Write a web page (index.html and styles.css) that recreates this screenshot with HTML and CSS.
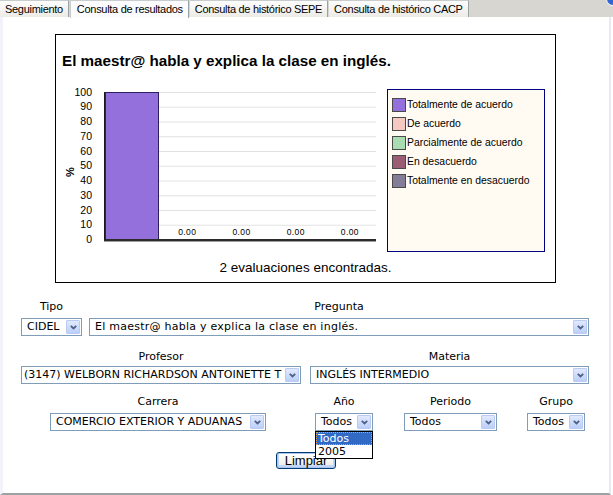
FILE: index.html
```html
<!DOCTYPE html>
<html lang="es">
<head>
<meta charset="utf-8">
<title>Consulta de resultados</title>
<link rel="stylesheet" href="styles.css">
</head>
<body>
<div class="tabs">
  <div class="tab">Seguimiento</div>
  <div class="tab active">Consulta de resultados</div>
  <div class="tab">Consulta de histórico SEPE</div>
  <div class="tab">Consulta de histórico CACP</div>
  <div class="tab-fill"><span class="corner"></span></div>
</div>
<div class="panel">
  <div class="chart">
    <div class="chart-title">El maestr@ habla y explica la clase en inglés.</div>
    <div class="chart-body">
      <div class="y-title"><span>%</span></div>
      <div class="y-labels">
        <span>100</span><span>90</span><span>80</span><span>70</span><span>60</span><span>50</span><span>40</span><span>30</span><span>20</span><span>10</span><span>0</span>
      </div>
      <div class="plot">
        <div class="col"><div class="bar c1" style="height:100%"></div></div>
        <div class="col"><span class="val">0.00</span></div>
        <div class="col"><span class="val">0.00</span></div>
        <div class="col"><span class="val">0.00</span></div>
        <div class="col"><span class="val">0.00</span></div>
      </div>
      <div class="legend">
        <div class="item"><span class="sw c1"></span>Totalmente de acuerdo</div>
        <div class="item"><span class="sw c2"></span>De acuerdo</div>
        <div class="item"><span class="sw c3"></span>Parcialmente de acuerdo</div>
        <div class="item"><span class="sw c4"></span>En desacuerdo</div>
        <div class="item"><span class="sw c5"></span>Totalmente en desacuerdo</div>
      </div>
    </div>
    <div class="chart-foot">2 evaluaciones encontradas.</div>
  </div>

  <div class="form">
    <div class="row row1">
      <div class="field w-tipo">
        <div class="lbl">Tipo</div>
        <div class="sel"><span class="txt">CIDEL</span><span class="arr"><svg width="7" height="5" viewBox="0 0 7 5"><path d="M0.8 0.8 L3.5 3.5 L6.2 0.8" fill="none" stroke="#4d6185" stroke-width="1.8"/></svg></span></div>
      </div>
      <div class="field w-preg">
        <div class="lbl">Pregunta</div>
        <div class="sel"><span class="txt lower">El maestr@ habla y explica la clase en inglés.</span><span class="arr"><svg width="7" height="5" viewBox="0 0 7 5"><path d="M0.8 0.8 L3.5 3.5 L6.2 0.8" fill="none" stroke="#4d6185" stroke-width="1.8"/></svg></span></div>
      </div>
    </div>
    <div class="row row2">
      <div class="field w-prof">
        <div class="lbl">Profesor</div>
        <div class="sel"><span class="txt tight">(3147) WELBORN RICHARDSON ANTOINETTE T</span><span class="arr"><svg width="7" height="5" viewBox="0 0 7 5"><path d="M0.8 0.8 L3.5 3.5 L6.2 0.8" fill="none" stroke="#4d6185" stroke-width="1.8"/></svg></span></div>
      </div>
      <div class="field w-mat">
        <div class="lbl">Materia</div>
        <div class="sel"><span class="txt">INGLÉS INTERMEDIO</span><span class="arr"><svg width="7" height="5" viewBox="0 0 7 5"><path d="M0.8 0.8 L3.5 3.5 L6.2 0.8" fill="none" stroke="#4d6185" stroke-width="1.8"/></svg></span></div>
      </div>
    </div>
    <div class="row row3">
      <div class="field w-carr">
        <div class="lbl">Carrera</div>
        <div class="sel"><span class="txt">COMERCIO EXTERIOR Y ADUANAS</span><span class="arr"><svg width="7" height="5" viewBox="0 0 7 5"><path d="M0.8 0.8 L3.5 3.5 L6.2 0.8" fill="none" stroke="#4d6185" stroke-width="1.8"/></svg></span></div>
      </div>
      <div class="field w-anio">
        <div class="lbl">Año</div>
        <div class="sel"><span class="txt">Todos</span><span class="arr"><svg width="7" height="5" viewBox="0 0 7 5"><path d="M0.8 0.8 L3.5 3.5 L6.2 0.8" fill="none" stroke="#4d6185" stroke-width="1.8"/></svg></span></div>
        <div class="dropdown">
          <div class="opt current">Todos</div>
          <div class="opt">2005</div>
        </div>
      </div>
      <div class="field w-per">
        <div class="lbl">Periodo</div>
        <div class="sel"><span class="txt">Todos</span><span class="arr"><svg width="7" height="5" viewBox="0 0 7 5"><path d="M0.8 0.8 L3.5 3.5 L6.2 0.8" fill="none" stroke="#4d6185" stroke-width="1.8"/></svg></span></div>
      </div>
      <div class="field w-grp">
        <div class="lbl">Grupo</div>
        <div class="sel"><span class="txt">Todos</span><span class="arr"><svg width="7" height="5" viewBox="0 0 7 5"><path d="M0.8 0.8 L3.5 3.5 L6.2 0.8" fill="none" stroke="#4d6185" stroke-width="1.8"/></svg></span></div>
      </div>
    </div>
    <div class="actions">
      <button class="btn" type="button">Limpiar</button>
    </div>
  </div>
</div>
</body>
</html>
```

FILE: styles.css
```css
html, body {
  margin: 0;
  padding: 0;
  background: #ffffff;
}
body {
  width: 613px;
  height: 495px;
  overflow: hidden;
  font-family: "DejaVu Sans", sans-serif;
  color: #000;
}

/* ---------- tabs ---------- */
.tabs {
  display: flex;
  height: 17px;
  background: #d8d6d1;
  font-family: "Liberation Sans", Arial, sans-serif;
  font-size: 11px;
  letter-spacing: -0.3px;
  position: relative;
  z-index: 1;
}
.tab {
  box-sizing: border-box;
  height: 17px;
  line-height: 16px;
  padding: 0 5px;
  margin-right: 1px;
  border: 1px solid #9aa3a4;
  border-top-color: #c8cccc;
  border-left: none;
  border-bottom: none;
  background: linear-gradient(#fdfdfd, #ecebe6);
  white-space: nowrap;
}
.tab.active {
  height: 18px;
  background: #fcfcfe;
  border-left: 1px solid #c8cccc;
  padding: 0 5px 0 6px;
}
.tab-fill {
  flex: 1;
  position: relative;
  overflow: hidden;
}
.corner {
  position: absolute;
  right: -7px;
  top: -8px;
  width: 12px;
  height: 12px;
  border-radius: 50%;
  background: #2f66d8;
  border: 1px solid #ffffff;
}

/* ---------- panel ---------- */
.panel {
  box-sizing: border-box;
  width: 611px;
  height: 478px;
  border-left: 3px solid #f2f2fa;
  border-right: 2px solid #e9eaf1;
  border-bottom: 2px solid #9ca3a3;
  padding-top: 17px;
  background: #fff;
}

/* ---------- chart ---------- */
.chart {
  box-sizing: border-box;
  width: 501px;
  height: 249px;
  margin-left: 52px;
  border: 1px solid #000;
  font-family: "Liberation Sans", Arial, sans-serif;
}
.chart-title {
  margin-top: 17px;
  padding-left: 6px;
  font-size: 15.2px;
  font-weight: bold;
  line-height: 17px;
}
.chart-body {
  display: flex;
  margin-top: 20px;
  height: 163px;
}
.y-title {
  width: 24px;
  box-sizing: border-box;
  padding-right: 5px;
  display: flex;
  justify-content: flex-end;
  align-items: center;
  padding-top: 2px;
}
.y-title span {
  display: block;
  transform: rotate(-90deg);
  font-size: 11px;
  font-weight: bold;
}
.y-labels {
  width: 24px;
  margin-left: -12px;
  margin-top: -4.4px;
  display: flex;
  flex-direction: column;
  text-align: right;
  font-size: 10.5px;
}
.y-labels span {
  display: block;
  height: 14.75px;
  line-height: 14.75px;
}
.plot {
  margin-left: 12px;
  margin-top: 3px;
  width: 272px;
  height: 149px;
  box-sizing: border-box;
  border-left: 1px solid #1a1a1a;
  border-bottom: 2px solid #2b2b2b;
  box-shadow: 0 1px 0 #a0a0a0;
  background-image: linear-gradient(#e2e2e2 1px, transparent 1px);
  background-size: 100% 14.75px;
  display: flex;
  align-items: stretch;
}
.col {
  flex: 1;
  display: flex;
  flex-direction: column;
  justify-content: flex-end;
  align-items: center;
}
.bar {
  align-self: stretch;
  box-sizing: border-box;
  border: 1px solid #2c2060;
  border-bottom: none;
}
.val {
  font-size: 8.5px;
  letter-spacing: 0.4px;
  line-height: 9px;
  margin-bottom: 2px;
  padding-left: 2px;
}
.legend {
  box-sizing: border-box;
  width: 158px;
  height: 163px;
  margin-left: 11px;
  border: 1px solid #000080;
  background: #fffbf2;
  padding: 5px 0 0 4px;
  font-size: 10.4px;
}
.item {
  display: flex;
  align-items: center;
  height: 19px;
  line-height: 14px;
}
.sw {
  display: block;
  box-sizing: border-box;
  width: 14px;
  height: 14px;
  border: 1px solid #4a4a4a;
  margin-right: 1px;
}
.c1 { background: #9370db; }
.c2 { background: #f5c8c1; }
.c3 { background: #a9dcb0; }
.c4 { background: #9b5d73; }
.c5 { background: #837d97; }
.chart-foot {
  margin-top: 8px;
  text-align: center;
  font-size: 13.5px;
  line-height: 16px;
}

/* ---------- form ---------- */
.form {
  font-family: "DejaVu Sans", Verdana, sans-serif;
  font-size: 11px;
}
.row {
  display: flex;
  align-items: flex-start;
}
.row1 { margin-top: 18px; padding-left: 18px; gap: 7px; }
.row2 { margin-top: 15px; padding-left: 18px; gap: 9px; }
.row3 { margin-top: 12px; padding-left: 47px; }
.row3 .w-anio { margin-left: 49px; }
.row3 .w-per { margin-left: 31px; }
.row3 .w-grp { margin-left: 30px; }
.field {
  display: flex;
  flex-direction: column;
  position: relative;
}
.lbl {
  text-align: center;
  line-height: 12px;
  height: 12px;
  margin-bottom: 5px;
}
.row2 .lbl { margin-bottom: 3px; }
.w-tipo { width: 61px; }
.w-preg { width: 500px; }
.w-prof { width: 280px; }
.w-mat { width: 279px; }
.w-carr { width: 216px; }
.w-anio { width: 58px; }
.w-per { width: 93px; }
.w-grp { width: 58px; }
.sel {
  box-sizing: border-box;
  height: 18px;
  border: 1px solid #7f9db9;
  background: #fff;
  padding: 1px;
  display: flex;
  align-items: center;
}
.txt {
  flex: 1;
  min-width: 0;
  padding-left: 4px;
  white-space: nowrap;
  overflow: hidden;
  line-height: 14px;
}
.txt.lower { letter-spacing: 0.25px; }
.txt.tight { padding-left: 1px; }
.arr {
  box-sizing: border-box;
  flex: none;
  width: 14px;
  height: 14px;
  border: 1px solid #b9cbf5;
  border-radius: 1px;
  background: linear-gradient(#e1eafd, #bccffa);
  display: flex;
  align-items: center;
  justify-content: center;
}
.arr svg { display: block; }
.dropdown {
  position: absolute;
  top: 100%;
  left: 0;
  width: 58px;
  box-sizing: border-box;
  border: 1px solid #000;
  background: #fff;
  font-size: 11px;
  z-index: 2;
}
.opt {
  height: 13px;
  line-height: 13px;
  padding-left: 2px;
}
.opt.current {
  background: #316ac5;
  color: #fff;
  outline: 1px dotted #e8a33a;
  outline-offset: -1px;
}
.actions {
  margin-top: 21px;
  display: flex;
  justify-content: center;
}
.btn {
  box-sizing: border-box;
  width: 60px;
  height: 17px;
  padding: 0;
  border: 1px solid #003c74;
  border-radius: 3px;
  background: linear-gradient(#ffffff, #ecebe5);
  box-shadow: inset 0 0 0 1px #a9c4f0, inset 0 -1px 0 2px #c4d6f5;
  font-family: "Liberation Sans", Arial, sans-serif;
  font-size: 13px;
  line-height: 14px;
  color: #000;
}
```
